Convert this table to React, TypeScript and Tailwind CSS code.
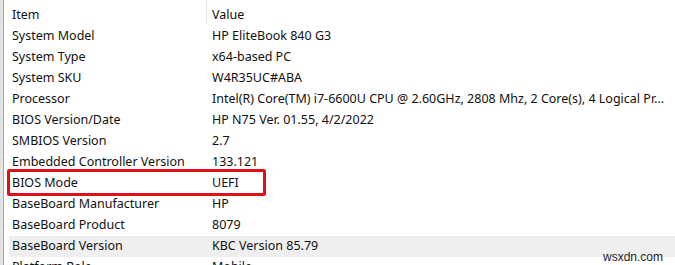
const rows: [string, string][] = [
  ["System Model", "HP EliteBook 840 G3"],
  ["System Type", "x64-based PC"],
  ["System SKU", "W4R35UC#ABA"],
  ["Processor", "Intel(R) Core(TM) i7-6600U CPU @ 2.60GHz, 2808 Mhz, 2 Core(s), 4 Logical Pr..."],
  ["BIOS Version/Date", "HP N75 Ver. 01.55, 4/2/2022"],
  ["SMBIOS Version", "2.7"],
  ["Embedded Controller Version", "133.121"],
  ["BIOS Mode", "UEFI"],
  ["BaseBoard Manufacturer", "HP"],
  ["BaseBoard Product", "8079"],
  ["BaseBoard Version", "KBC Version 85.79"],
  ["Platform Role", "Mobile"],
];

export default function App() {
  return (
    <div className="relative flex h-[265px] w-[675px] overflow-hidden bg-white text-[12.5px] text-[#111] [font-family:'Noto_Sans',sans-serif]">
      {/* window edge */}
      <div className="w-[3px] shrink-0 bg-[#e3e3e3]" />
      <div className="w-px shrink-0 bg-[#a8a8a8]" />

      <div className="flex-1 pl-[5px] pt-px">
        {/* header */}
        <div className="flex h-[25px] items-center pt-[3px]">
          <div className="w-[197px] shrink-0 pl-[3px]">Item</div>
          <div className="-mt-[4px] h-[25px] w-px self-start bg-[#e5e5e5]" />
          <div className="pl-[5px]">Value</div>
        </div>

        {rows.map(([item, value]) => (
          <div
            key={item}
            className={`flex h-[21px] items-center whitespace-nowrap ${
              item === "BaseBoard Version" ? "bg-[#efefef]" : ""
            }`}
          >
            <div className="w-[198px] shrink-0 pl-[3px]">{item}</div>
            <div className="pl-[5px]">{value}</div>
          </div>
        ))}
      </div>

      {/* highlight box */}
      <div className="absolute left-[7px] top-[169px] h-[27px] w-[259px] rounded-[2px] border-[3px] border-[#e0101a]" />

      {/* watermark */}
      <div className="absolute right-[12px] top-[248px] text-[12px] text-[#222] [font-family:'Liberation_Sans',sans-serif]">
        wsxdn.com
      </div>
    </div>
  );
}
